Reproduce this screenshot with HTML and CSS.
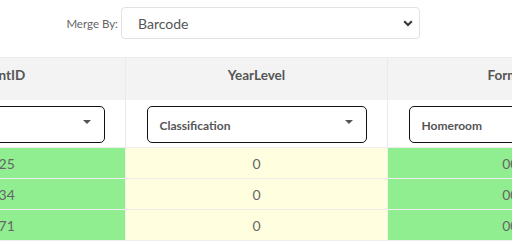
FILE: index.html
```html
<!DOCTYPE html>
<html>
<head>
<meta charset="utf-8">
<link rel="stylesheet" href="styles.css">
</head>
<body>
<div class="merge-row">
  <label class="merge-label">Merge By:</label>
  <div class="merge-select">
    <span>Barcode</span>
    <svg class="chev" width="10" height="7" viewBox="0 0 10 7"><path d="M1.2 1.2 L5 5 L8.8 1.2" fill="none" stroke="#333" stroke-width="2"/></svg>
  </div>
</div>
<div class="grid-wrap">
  <div class="grid">
    <div class="row head">
      <div class="cell">StudentID</div>
      <div class="cell">YearLevel</div>
      <div class="cell">FormClass</div>
    </div>
    <div class="row filters">
      <div class="cell"><div class="dd"><span></span><i class="caret"></i></div></div>
      <div class="cell"><div class="dd"><span>Classification</span><i class="caret"></i></div></div>
      <div class="cell"><div class="dd"><span>Homeroom</span><i class="caret"></i></div></div>
    </div>
    <div class="row data">
      <div class="cell green">10025</div>
      <div class="cell yellow">0</div>
      <div class="cell green">0012</div>
    </div>
    <div class="row data">
      <div class="cell green">10034</div>
      <div class="cell yellow">0</div>
      <div class="cell green">0012</div>
    </div>
    <div class="row data">
      <div class="cell green">10071</div>
      <div class="cell yellow">0</div>
      <div class="cell green">0012</div>
    </div>
  </div>
</div>
</body>
</html>
```
FILE: styles.css
```css
html, body {
  margin: 0;
  padding: 0;
  background: #fff;
  font-family: "Lato", "Open Sans", sans-serif;
  overflow: hidden;
}
.merge-row {
  display: grid;
  grid-template-columns: 118px 299px;
  column-gap: 3px;
  align-items: center;
  padding-top: 7px;
  height: 32px;
}
.merge-label {
  text-align: right;
  font-size: 11.5px;
  color: #666;
}
.merge-select {
  box-sizing: border-box;
  height: 32px;
  border: 1px solid #e2e2e2;
  border-radius: 4px;
  display: flex;
  align-items: center;
  justify-content: space-between;
  padding: 0 6px 0 16px;
  font-size: 14px;
  color: #555;
}
.chev { margin-top: 1px; }
.grid-wrap {
  margin-top: 18px;
  overflow: hidden;
  width: 512px;
}
.grid {
  width: 786px;
  margin-left: -137px;
}
.row {
  display: grid;
  grid-template-columns: 262px 262px 262px;
}
.cell {
  box-sizing: border-box;
  display: flex;
  align-items: center;
  justify-content: center;
  border-left: 1px solid #eaeaea;
}
.head {
  height: 43px;
  background: #f3f3f3;
  border-top: 1px solid #ececec;
  box-sizing: border-box;
}
.head .cell {
  font-weight: 700;
  font-size: 13.5px;
  color: #555;
  padding-bottom: 8px;
}
.filters {
  height: 48px;
  background: #fff;
  border-bottom: 1px solid #eee;
  box-sizing: border-box;
}
.dd {
  box-sizing: border-box;
  width: 220px;
  height: 37px;
  margin-top: 1px;
  border: 1px solid #111;
  border-radius: 5px;
  display: flex;
  align-items: center;
  justify-content: space-between;
  padding: 3px 13px 0 12px;
  font-weight: 700;
  font-size: 12px;
  color: #555;
}
.caret {
  width: 0;
  height: 0;
  border-left: 4px solid transparent;
  border-right: 4px solid transparent;
  border-top: 4px solid #555;
  margin-top: -7px;
}
.data {
  height: 31px;
  border-bottom: 1px solid #eee;
  box-sizing: border-box;
}
.data .cell {
  font-size: 14px;
  color: #666;
  border-left-color: #f2f2e8;
}
.green { background: #90ee90; }
.yellow { background: #ffffe0; }
```
